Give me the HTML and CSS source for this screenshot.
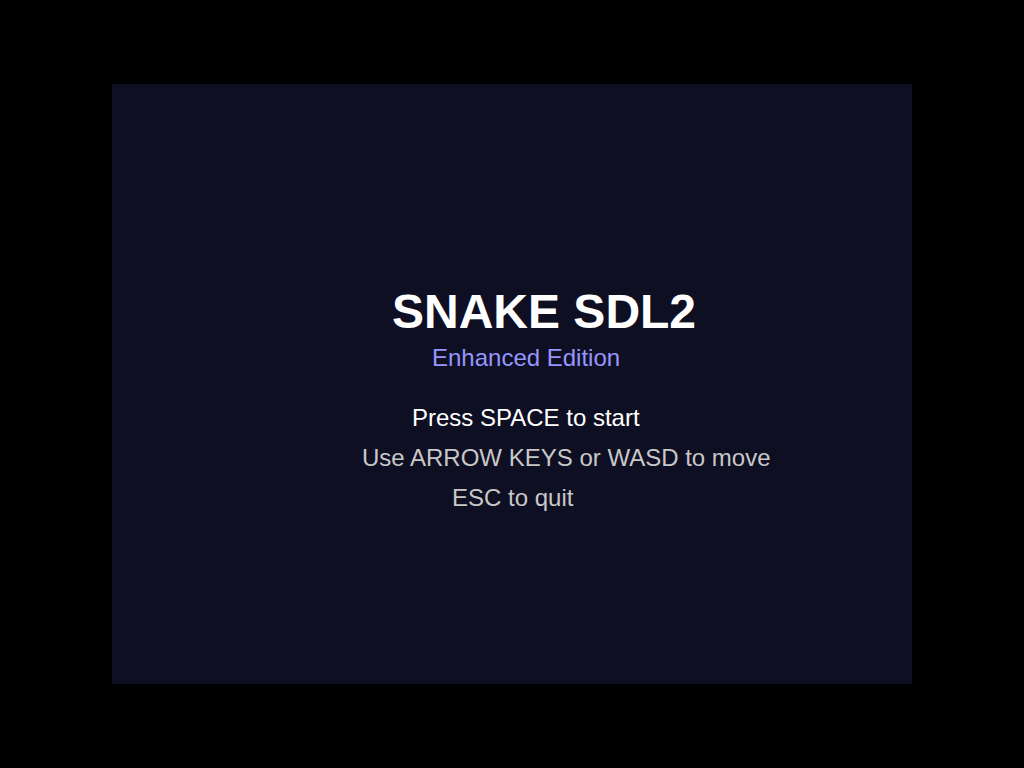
FILE: index.html
```html
<!DOCTYPE html>
<html lang="en">
<head>
<meta charset="utf-8">
<title>Snake SDL2</title>
<link rel="stylesheet" href="styles.css">
</head>
<body>
<main class="screen">
  <section class="menu">
    <h1 class="title">SNAKE SDL2</h1>
    <p class="line subtitle">Enhanced Edition</p>
    <p class="line start">Press SPACE to start</p>
    <p class="line hint controls">Use ARROW KEYS or WASD to move</p>
    <p class="line hint quit">ESC to quit</p>
  </section>
</main>
</body>
</html>
```
FILE: styles.css
```css
html, body {
  margin: 0;
  padding: 0;
  background: #000000;
}

body {
  width: 1024px;
  height: 768px;
  overflow: hidden;
  font-family: "Liberation Sans", Arial, sans-serif;
}

.screen {
  width: 800px;
  height: 600px;
  margin: 84px 0 0 112px;
  background: rgb(15, 15, 35);
}

.menu {
  display: flex;
  flex-direction: column;
  align-items: flex-start;
  padding-top: 204px;
}

.title {
  margin: 0 0 0 280px;
  font-size: 48px;
  line-height: 48px;
  font-weight: 700;
  color: #ffffff;
}

.line {
  margin: 0;
  font-size: 24px;
  line-height: 24px;
  font-weight: 400;
}

.subtitle {
  margin: 10px 0 0 320px;
  color: rgb(150, 150, 255);
}

.start {
  margin: 36px 0 0 300px;
  color: #ffffff;
}

.hint {
  color: rgb(200, 200, 200);
}

.controls {
  margin: 16px 0 0 250px;
}

.quit {
  margin: 16px 0 0 340px;
}
```
